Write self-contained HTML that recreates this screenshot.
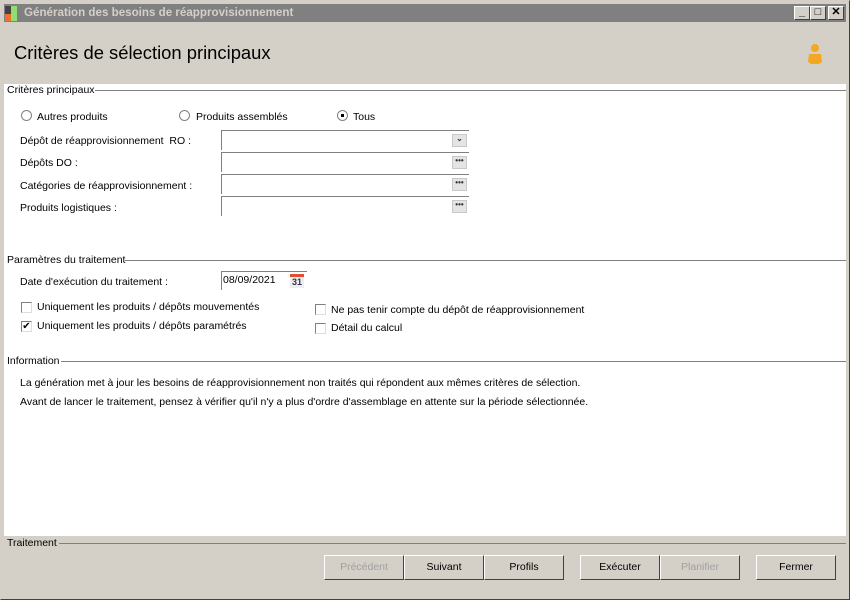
<!DOCTYPE html><html><head><meta charset="utf-8"><style>
*{margin:0;padding:0;box-sizing:border-box}
body{width:850px;height:600px;background:#d4d0c8;font-family:"Liberation Sans",sans-serif;font-size:10.5px;color:#000;position:relative;overflow:hidden}
.a{position:absolute;white-space:nowrap}
.win{position:absolute;left:0;top:0;width:850px;height:600px;border:1px solid #d4d0c8;border-right-color:#404040;border-bottom-color:#404040}
.tb{left:4px;top:4px;width:842px;height:18px;background:#808080;color:#d4d0c8;font-weight:bold;font-size:11.6px;line-height:18px;padding-left:20px}
.wb{width:16px;height:14px;top:6px;background:#d4d0c8;border:1px solid;border-color:#fff #404040 #404040 #fff;font-size:11px;line-height:11px;text-align:center;font-weight:bold}
.panel{left:4px;top:84px;width:842px;height:452px;background:#fff}
.line{height:1px;background:#808080}
.inp{height:20px;border-top:1px solid #808080;border-left:1px solid #808080;background:#fff}
.btn{width:15px;height:13px;background:#e4e4e4;border:1px solid #c8c8c8;font-size:8px;line-height:8px;text-align:center;color:#333;font-weight:bold}
.rad{width:11px;height:11px;border-radius:50%;border:1px solid #808080;background:#fff}
.chk{width:11px;height:11px;border:1px solid #808080;border-right-color:#ddd;border-bottom-color:#ddd;background:#fff;font-size:10px;line-height:9px;text-align:center}
.pb{top:555px;height:25px;border:1px solid;border-color:#fff #404040 #404040 #fff;background:#d4d0c8;text-align:center;line-height:23px;font-size:10.5px}
.dis{color:#a0a0a0}
</style></head><body>
<div class="win"></div>
<div class="a tb">Génération des besoins de réapprovisionnement</div>
<div class="a" style="left:5px;top:6px;width:6px;height:8px;background:#444"></div>
<div class="a" style="left:5px;top:14px;width:6px;height:7px;background:#f07030"></div>
<div class="a" style="left:11px;top:6px;width:6px;height:15px;background:#8ee070"></div>
<div class="a wb" style="left:794px">_</div>
<div class="a wb" style="left:810px">□</div>
<div class="a wb" style="left:828px">✕</div>
<div class="a" style="left:14px;top:42px;font-size:18.4px">Critères de sélection principaux</div>
<svg class="a" style="left:807px;top:43px" width="16" height="22"><circle cx="8" cy="5" r="4" fill="#f5a623"/><path d="M2 11h12l1 8-3 2H4L1 19z" fill="#f5a623"/></svg>
<div class="a panel"></div>
<div class="a line" style="left:90px;top:90px;width:756px"></div>
<div class="a" style="left:7px;top:84px;background:#fff">Critères principaux</div>
<div class="a rad" style="left:21px;top:110px"></div><div class="a" style="left:37px;top:111px">Autres produits</div>
<div class="a rad" style="left:179px;top:110px"></div><div class="a" style="left:196px;top:111px">Produits assemblés</div>
<div class="a rad" style="left:337px;top:110px"><div style="width:3px;height:3px;background:#000;margin:3px"></div></div><div class="a" style="left:353px;top:111px">Tous</div>
<div class="a" style="left:20px;top:135px">Dépôt de réapprovisionnement &nbsp;RO :</div>
<div class="a" style="left:20px;top:157px">Dépôts DO :</div>
<div class="a" style="left:20px;top:180px">Catégories de réapprovisionnement :</div>
<div class="a" style="left:20px;top:202px">Produits logistiques :</div>
<div class="a inp" style="left:221px;top:130px;width:248px"></div>
<div class="a inp" style="left:221px;top:152px;width:248px"></div>
<div class="a inp" style="left:221px;top:174px;width:248px"></div>
<div class="a inp" style="left:221px;top:196px;width:248px"></div>
<div class="a btn" style="left:452px;top:134px">⌄</div>
<div class="a btn" style="left:452px;top:156px">•••</div>
<div class="a btn" style="left:452px;top:178px">•••</div>
<div class="a btn" style="left:452px;top:200px">•••</div>
<div class="a line" style="left:125px;top:260px;width:721px"></div>
<div class="a" style="left:7px;top:254px;background:#fff">Paramètres du traitement</div>
<div class="a" style="left:20px;top:276px">Date d'exécution du traitement :</div>
<div class="a inp" style="left:221px;top:271px;width:86px;height:19px;padding:2px 0 0 1px">08/09/2021</div>
<div class="a" style="left:290px;top:274px;width:14px;height:14px;background:#eee;border-top:3px solid #e05030;font-size:9px;font-weight:bold;color:#335;text-align:center;line-height:10px">31</div>
<div class="a chk" style="left:21px;top:302px"></div><div class="a" style="left:37px;top:301px">Uniquement les produits / dépôts mouvementés</div>
<div class="a chk" style="left:21px;top:321px">✔</div><div class="a" style="left:37px;top:320px">Uniquement les produits / dépôts paramétrés</div>
<div class="a chk" style="left:315px;top:304px"></div><div class="a" style="left:331px;top:304px">Ne pas tenir compte du dépôt de réapprovisionnement</div>
<div class="a chk" style="left:315px;top:323px"></div><div class="a" style="left:331px;top:322px">Détail du calcul</div>
<div class="a line" style="left:61px;top:361px;width:785px"></div>
<div class="a" style="left:7px;top:355px;background:#fff">Information</div>
<div class="a" style="left:20px;top:377px">La génération met à jour les besoins de réapprovisionnement non traités qui répondent aux mêmes critères de sélection.</div>
<div class="a" style="left:20px;top:396px">Avant de lancer le traitement, pensez à vérifier qu'il n'y a plus d'ordre d'assemblage en attente sur la période sélectionnée.</div>
<div class="a line" style="left:59px;top:543px;width:787px"></div>
<div class="a" style="left:7px;top:537px">Traitement</div>
<div class="a pb dis" style="left:324px;width:80px">Précédent</div>
<div class="a pb" style="left:404px;width:80px">Suivant</div>
<div class="a pb" style="left:484px;width:80px">Profils</div>
<div class="a pb" style="left:580px;width:80px">Exécuter</div>
<div class="a pb dis" style="left:660px;width:80px">Planifier</div>
<div class="a pb" style="left:756px;width:80px">Fermer</div>
</body></html>
